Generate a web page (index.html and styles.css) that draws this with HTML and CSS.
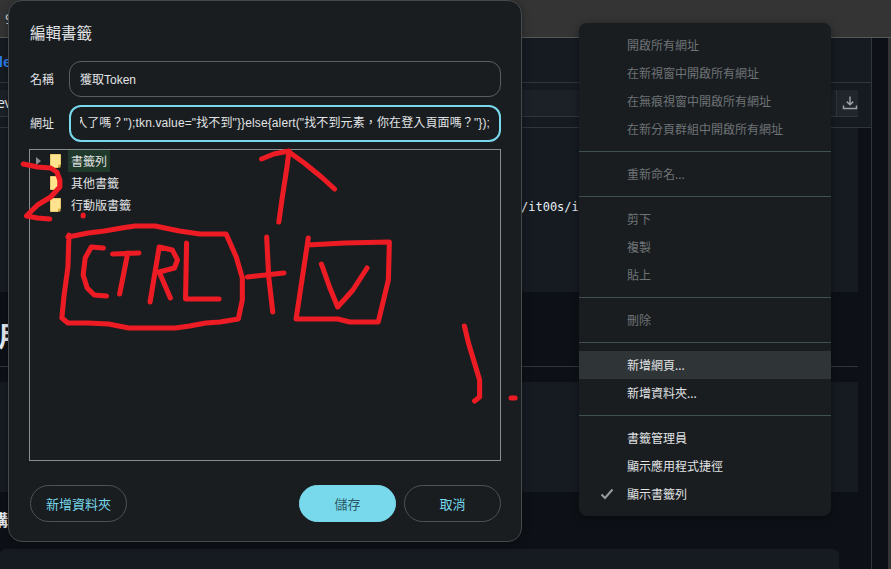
FILE: index.html
```html
<!DOCTYPE html>
<html lang="zh-Hant">
<head>
  <meta charset="UTF-8" />
  <meta name="viewport" content="width=device-width, initial-scale=1.0" />
  <title>編輯書籤</title>
  <link rel="stylesheet" href="styles.css">
</head>
<body>
  <!-- page behind the dialog -->
  <div class="topbar">9</div>
  <div class="layout">
    <div class="main">
      <div class="repo-row"><span class="repo-link">le</span></div>
      <div class="tool-row">
        <div class="path-box">
          <span class="path-text">ev</span>
          <span class="path-btn">
            <svg width="16" height="16" viewBox="0 0 16 16" fill="none" stroke="#9aa0a6" stroke-width="1.5">
              <path d="M8 1.500v8M4.800 6.600 8 9.800l3.200-3.200" />
              <path d="M1.500 10.500v3h13v-3" />
            </svg>
          </span>
        </div>
      </div>
      <div class="panel panel-code"><code class="code-text">/it00s/i</code></div>
      <div class="gap-head"><h2 class="page-head">用</h2></div>
      <div class="panel panel-mid"></div>
      <div class="gap-text"><span class="sub-head">構</span></div>
      <div class="panel panel-last"></div>
    </div>
    <div class="rail"></div>
    <div class="scroll-edge"></div>
  </div>

  <!-- edit bookmark dialog -->
  <div class="dialog">
    <div class="dialog-title">編輯書籤</div>
    <div class="field">
      <label class="field-label">名稱</label>
      <div class="field-box">獲取Token</div>
    </div>
    <div class="field">
      <label class="field-label">網址</label>
      <div class="field-box focused"><div class="url-clip"><span class="url-text">alert("你登入了嗎？");tkn.value="找不到"}}else{alert("找不到元素，你在登入頁面嗎？"});</span></div></div>
    </div>
    <div class="tree">
      <div class="tree-row">
        <span class="tree-arrow"></span>
        <svg class="folder" width="11" height="14" viewBox="0 0 11 14"><path d="M.5.5h10v10l-2.500 3H.5z" fill="#ffe38f" stroke="#ecc96c" /><path d="M8 13.500v-3h2.500v3z" fill="#e0b44c" /></svg>
        <span class="tree-label selected">書籤列</span>
      </div>
      <div class="tree-row">
        <span class="tree-arrow none"></span>
        <svg class="folder" width="11" height="14" viewBox="0 0 11 14"><path d="M.5.5h10v10l-2.500 3H.5z" fill="#ffe38f" stroke="#ecc96c" /><path d="M8 13.500v-3h2.500v3z" fill="#e0b44c" /></svg>
        <span class="tree-label">其他書籤</span>
      </div>
      <div class="tree-row">
        <span class="tree-arrow none"></span>
        <svg class="folder" width="11" height="14" viewBox="0 0 11 14"><path d="M.5.5h10v10l-2.500 3H.5z" fill="#ffe38f" stroke="#ecc96c" /><path d="M8 13.500v-3h2.500v3z" fill="#e0b44c" /></svg>
        <span class="tree-label">行動版書籤</span>
      </div>
    </div>
    <div class="dialog-buttons">
      <button class="btn">新增資料夾</button>
      <div class="btn-group">
        <button class="btn primary">儲存</button>
        <button class="btn">取消</button>
      </div>
    </div>
  </div>

  <!-- context menu -->
  <div class="menu">
    <div class="menu-item off">開啟所有網址</div>
    <div class="menu-item off">在新視窗中開啟所有網址</div>
    <div class="menu-item off">在無痕視窗中開啟所有網址</div>
    <div class="menu-item off">在新分頁群組中開啟所有網址</div>
    <div class="menu-sep"></div>
    <div class="menu-item off">重新命名...</div>
    <div class="menu-sep"></div>
    <div class="menu-item off">剪下</div>
    <div class="menu-item off">複製</div>
    <div class="menu-item off">貼上</div>
    <div class="menu-sep"></div>
    <div class="menu-item off">刪除</div>
    <div class="menu-sep"></div>
    <div class="menu-item hover">新增網頁...</div>
    <div class="menu-item">新增資料夾...</div>
    <div class="menu-sep"></div>
    <div class="menu-item">書籤管理員</div>
    <div class="menu-item">顯示應用程式捷徑</div>
    <div class="menu-item">
      <svg class="check" width="14" height="12" viewBox="0 0 14 12" fill="none" stroke="#9a9c9e" stroke-width="2"><path d="M1.500 6.500 5 10l7.500-8.500" /></svg>
      顯示書籤列
    </div>
  </div>

  <!-- red marker scribbles -->
  <svg class="scribble" width="891" height="569" viewBox="0 0 891 569" fill="none" stroke="#ed1c24" stroke-width="5" stroke-linecap="round" stroke-linejoin="round">
    <g transform="scale(1.014 1)">
      <path d="M23 164 37 167 50 168 56 172 59 180 59 187 50 197 37 205 26 216 37 218 49 219" />
      <path d="M82 215v1" />
      <path d="M258 159 270 154 285 151 283 167 278 200 275 222" />
      <path d="M285 152 300 163 317 177 330 189" />
      <path d="M67 237 87 233 103 231 120 228 133 226 153 226 177 231 197 234 223 234 233 257 239 278 239 300 235 319 217 322 203 323 187 326 173 328 127 328 107 324 87 323 67 323 61 318 63 297 67 267 68 235" />
      <path d="M102 248 90 247 84 258 82 275 86 288 93 295 105 296" />
      <path d="M111 254 137 253M126 253 118 294" />
      <path d="M157 247 148 302M157 247 170 250 175 260 172 268 157 272 168 298" />
      <path d="M184 243 183 299 216 299" />
      <path d="M263 237 265 277 269 312M244 277 280 273" />
      <path d="M304 238 303 245 292 319 333 319 345 322 373 322 383 280 384 242 340 243 303 245" />
      <path d="M317 264 325 287 333 307 348 290 362 268" />
      <path d="M458 326 462 343 473 380 473 397 468 401" />
      <path d="M504 398h4" />
    </g>
  </svg>
</body>
</html>
```

FILE: styles.css
```css
* {
  box-sizing: border-box;
}

html, body {
  height: 100%;
}

body {
  margin: 0;
  background: #0d1117;
  color: #e6edf3;
  font-family: "Noto Sans", "Noto Sans CJK TC", sans-serif;
  overflow: hidden;
}

/* page behind */
.topbar {
  height: 38px;
  padding-left: 5px;
  background: #343434;
  border-bottom: 1px solid #55585a;
  color: #ddd;
  font-size: 14px;
  line-height: 38px;
}

.layout {
  display: flex;
  height: 531px;
}

.main {
  width: 872px;
  border-right: 1px solid #30363d;
}

.rail {
  width: 16px;
  background: #0d1117;
}

.scroll-edge {
  width: 3px;
  background: #343434;
}

.repo-row {
  height: 45px;
  background: #161b22;
  border-bottom: 1px solid #30363d;
  line-height: 46px;
}

.repo-link {
  margin-left: -1px;
  color: #2f81f7;
  font-size: 14px;
  font-weight: 600;
}

.tool-row {
  height: 45px;
  padding: 7px 13px 9px 0;
  background: #161b22;
  border-bottom: 1px solid #30363d;
}

.path-box {
  display: flex;
  justify-content: space-between;
  height: 27px;
  background: #1c2128;
  border-bottom: 1px solid #30363d;
  line-height: 26px;
  font-size: 14px;
}

.path-text {
  margin-left: -3px;
}

.path-btn {
  display: flex;
  align-items: center;
  justify-content: center;
  width: 22px;
  padding-left: 5px;
  background: #21262d;
  border-left: 1px solid #30363d;
}

.path-btn svg {
  flex: none;
}

.panel {
  width: 858px;
  background: #161b22;
}

.panel-code {
  height: 164px;
  padding: 70px 0 0 521px;
  line-height: 15px;
}

.code-text {
  font-family: "DejaVu Sans Mono", monospace;
  font-size: 12px;
}

.gap-head {
  height: 90px;
  width: 858px;
}

.page-head {
  margin: 0;
  height: 75px;
  border-bottom: 1px solid #30363d;
  padding-top: 25px;
  font-size: 28px;
  line-height: 38px;
  font-weight: 700;
  text-indent: -2px;
}

.panel-mid {
  height: 110px;
}

.gap-text {
  height: 57px;
  padding-top: 17px;
  font-size: 16px;
  line-height: 22px;
}

.sub-head {
  margin-left: -8px;
  font-weight: 600;
}

.panel-last {
  width: 839px;
  height: 30px;
  border-radius: 6px 6px 0 0;
}

/* dialog */
.dialog {
  position: absolute;
  top: 0;
  left: 8px;
  width: 514px;
  height: 542px;
  padding: 20px 20px 0 21px;
  background: #191d20;
  border: 1px solid #44494c;
  border-radius: 14px;
  box-shadow: 0 2px 8px rgba(0, 0, 0, 0.35);
  color: #e1e3e5;
}

.dialog-title {
  height: 24px;
  margin-bottom: 16px;
  font-size: 15.5px;
  line-height: 24px;
}

.field {
  display: flex;
  align-items: center;
  margin-bottom: 8px;
}

.field-label {
  width: 39px;
  flex: none;
  font-size: 12px;
}

.field-box {
  flex: 1;
  min-width: 0;
  height: 36px;
  padding: 0 10px;
  border: 1px solid #5a5f62;
  border-radius: 12px;
  font-family: "Liberation Sans", "Noto Sans CJK TC", sans-serif;
  font-size: 12px;
  line-height: 36px;
  white-space: nowrap;
  overflow: hidden;
}

.field-box.focused {
  height: 37px;
  margin-bottom: -1px;
  padding: 0 9px;
  border: 2px solid #78d9ec;
  line-height: 33px;
}

.url-clip {
  display: flex;
  justify-content: flex-end;
  overflow: hidden;
}

.url-text {
  flex: none;
  letter-spacing: 0.12px;
}

.tree {
  height: 312px;
  margin-left: -1px;
  border: 1px solid #888e90;
}

.tree-row {
  display: flex;
  align-items: center;
  height: 22px;
}

.tree-arrow {
  position: relative;
  width: 20px;
  height: 0;
  flex: none;
}

.tree-arrow::before {
  content: "";
  position: absolute;
  top: -4px;
  left: 6px;
  border-left: 5px solid #8a8d8f;
  border-top: 4px solid transparent;
  border-bottom: 4px solid transparent;
}

.tree-arrow.none::before {
  display: none;
}

.folder {
  flex: none;
  margin-right: 7px;
}

.tree-label {
  height: 22px;
  padding: 0 3px;
  font-size: 12px;
  line-height: 24px;
}

.tree-label.selected {
  background: #1f3a2a;
}

.dialog-buttons {
  display: flex;
  justify-content: space-between;
  margin-top: 24px;
}

.btn-group {
  display: flex;
  gap: 8px;
}

.btn {
  width: 97px;
  height: 37px;
  padding: 0;
  border: 1px solid #4c5356;
  border-radius: 19px;
  background: transparent;
  color: #78d9ec;
  font-family: inherit;
  font-size: 13px;
}

.btn.primary {
  border-color: #78d9ec;
  background: #78d9ec;
  color: #2c5a66;
}

/* context menu */
.menu {
  position: absolute;
  top: 23px;
  left: 579px;
  width: 252px;
  height: 493px;
  padding: 8px 0;
  background: #191d20;
  border-radius: 8px;
  box-shadow: 0 2px 10px rgba(0, 0, 0, 0.4);
}

.menu-item {
  position: relative;
  height: 28px;
  padding-left: 48px;
  color: #e1e3e5;
  font-size: 12px;
  line-height: 30px;
}

.menu-item.off {
  color: #6e7376;
}

.menu-item.hover {
  background: #2f3437;
}

.menu-sep {
  height: 1px;
  margin: 8px 0;
  background: #3f4f52;
}

.check {
  position: absolute;
  top: 8px;
  left: 21px;
}

.scribble {
  position: absolute;
  top: 0;
  left: 0;
  pointer-events: none;
}
```
